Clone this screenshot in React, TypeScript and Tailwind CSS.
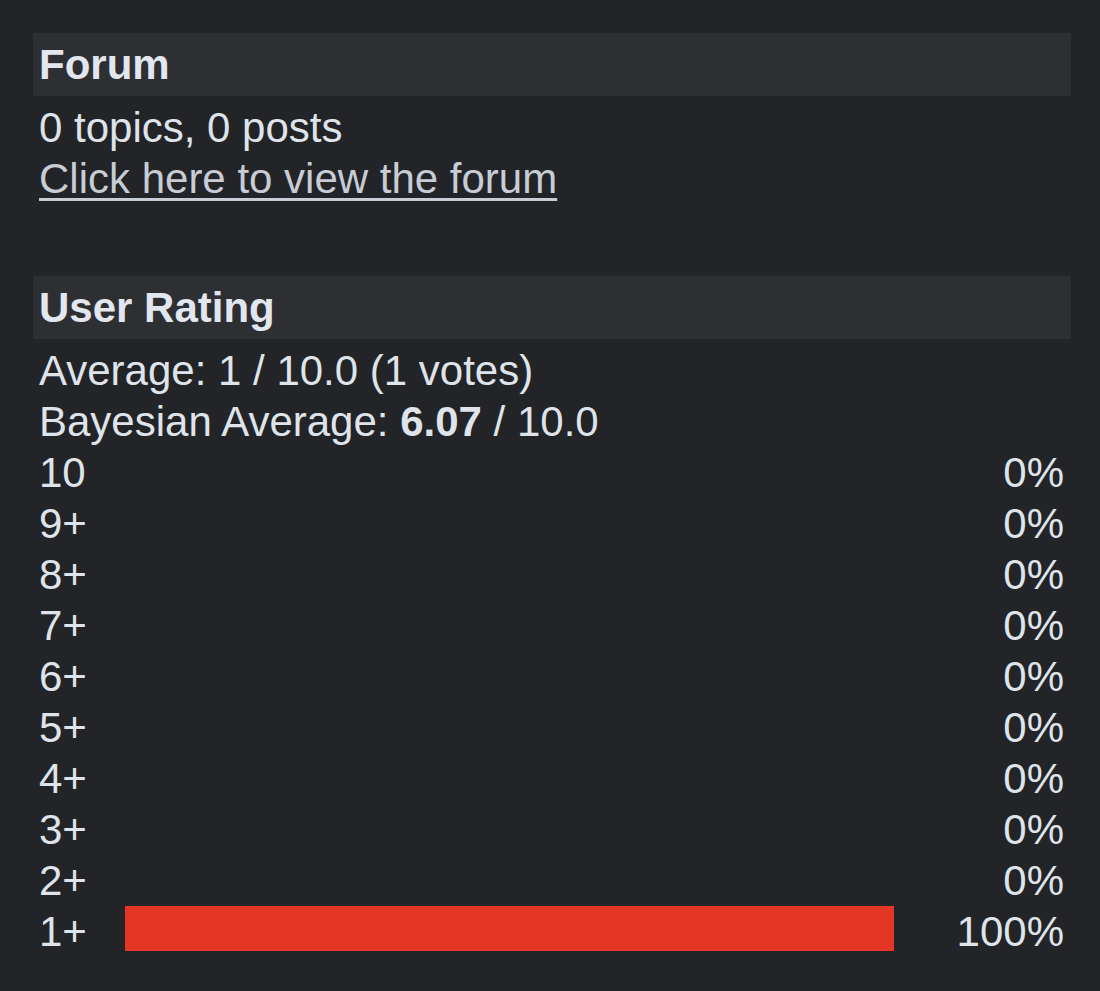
import React from "react";

const rows: { label: string; pct: number }[] = [
  { label: "10", pct: 0 },
  { label: "9+", pct: 0 },
  { label: "8+", pct: 0 },
  { label: "7+", pct: 0 },
  { label: "6+", pct: 0 },
  { label: "5+", pct: 0 },
  { label: "4+", pct: 0 },
  { label: "3+", pct: 0 },
  { label: "2+", pct: 0 },
  { label: "1+", pct: 100 },
];

export default function App() {
  return (
    <div className="min-h-[991px] bg-[#232427] pt-[33px] pl-[33px] pr-[29px] font-['Liberation_Sans',Arial,Helvetica,sans-serif] text-[42px] leading-[51px] text-[#dfe3ea]">
      <section>
        <h2 className="bg-[#2e2f33] pl-[6px] pr-[7px] py-[6px] font-bold mb-[6px] text-[#e2e6ee]">Forum</h2>
        <div className="pl-[6px]">0 topics, 0 posts</div>
        <div className="pl-[6px]">
          <a
            href="#"
            className="text-[#c7ccd5] underline decoration-[3px] underline-offset-[5px]"
          >
            Click here to view the forum
          </a>
        </div>
      </section>

      <section className="mt-[72px]">
        <h2 className="bg-[#2e2f33] pl-[6px] pr-[7px] py-[6px] font-bold mb-[6px] text-[#e2e6ee]">User Rating</h2>
        <div className="pl-[6px]">Average: 1 / 10.0 (1 votes)</div>
        <div className="pl-[6px]">
          Bayesian Average: <span className="font-bold">6.07</span> / 10.0
        </div>
        <div className="pl-[6px] pr-[7px]">
          {rows.map((r) => (
            <div key={r.label} className="grid grid-cols-[86px_769px_1fr] h-[51px]">
              <div>{r.label}</div>
              <div>
                {r.pct > 0 && (
                  <div className="h-[45px] bg-[#e53524]" style={{ width: `${r.pct}%` }} />
                )}
              </div>
              <div className="text-right">{r.pct}%</div>
            </div>
          ))}
        </div>
      </section>
    </div>
  );
}
